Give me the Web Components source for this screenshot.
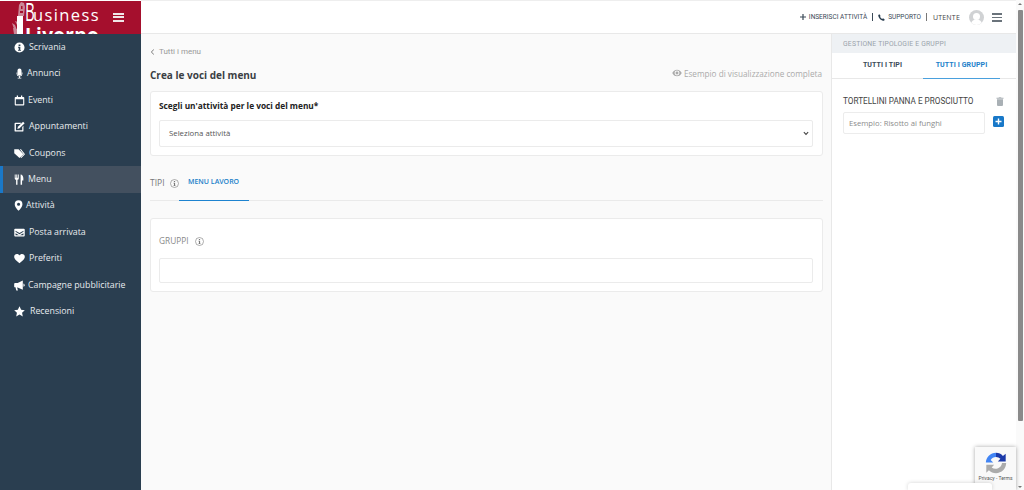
<!DOCTYPE html>
<html lang="it"><head><meta charset="utf-8"><title>Menu</title>
<style>
html,body{margin:0;height:490px;overflow:hidden;background:#fff;font-family:"Open Sans",sans-serif}
</style></head><body>
<app-shell>
  <side-nav slot="side"></side-nav>
  <top-bar slot="top"></top-bar>
  <menu-main slot="main"></menu-main>
  <group-panel slot="panel"></group-panel>
</app-shell>
<fake-scroll></fake-scroll>
<captcha-badge></captcha-badge>
<script>
const ICONS={
 info:'<path fill-rule="evenodd" d="M6 .5a5.500 5.500 0 1 1 0 11 5.500 5.500 0 0 1 0-11zM5 2.600v1.700h2V2.600zM4.400 5.200v1h.7v2.400h-.7v1h3.200v-1h-.7V5.200z"/>',
 mic:'<path d="M6 .5a2.200 2.200 0 0 1 2.200 2.200v3.400a2.200 2.200 0 0 1-4.400 0V2.700A2.200 2.200 0 0 1 6 .5z"/><path d="M2.800 5h.9v1.200a2.300 2.300 0 0 0 4.600 0V5h.9v1.200a3.200 3.200 0 0 1-2.700 3.100v1.300h1.500v.9H4v-.9h1.500V9.300a3.200 3.200 0 0 1-2.700-3.100z"/>',
 cal:'<path fill-rule="evenodd" d="M3 .6h1.400v1.500h3.200V.6H9v1.500h1.200a1 1 0 0 1 1 1v7.300a1 1 0 0 1-1 1H1.800a1 1 0 0 1-1-1V3.100a1 1 0 0 1 1-1H3zM2 4.600v5.600h8V4.600z"/>',
 edit:'<path d="M1.600 2h6.600L6.900 3.300H2.100v6.900h6.900V6.500L10.300 5.200V10.500a1 1 0 0 1-1 1H1.600a1 1 0 0 1-1-1V3a1 1 0 0 1 1-1z"/><path d="M9.900.7l1.700 1.700-5.600 5.600-2.300.6.600-2.300z"/>',
 tag:'<path d="M.3 1.300h4.700L10.300 6.700 6 11 .3 5.800z"/><path d="M6.300 1.300h1.400L12 6.700 8 11l-.9-.7 3.500-3.600z"/>',
 fork:'<path d="M.8.6h1v3.400h.7V.6h1v3.400h.7V.6h1v4.300c0 .8-.7 1.300-1.400 1.400v5.400H2.300V6.300C1.500 6.200.8 5.700.8 4.900z"/><path d="M7.200.6c1.900 0 3 2 3 4.400v2.200H8.800v4.500H7.200z"/>',
 pin:'<path fill-rule="evenodd" d="M5 .3a4.200 4.200 0 0 1 4.200 4.200c0 2.900-3 5.900-4.200 7.200C3.800 10.400.8 7.400.8 4.500A4.200 4.200 0 0 1 5 .3zM5 3a1.700 1.700 0 1 0 0 3.400A1.700 1.700 0 0 0 5 3z"/>',
 mail:'<path fill-rule="evenodd" d="M1.300 1.800h9.400a1 1 0 0 1 1 1v6.600a1 1 0 0 1-1 1H1.300a1 1 0 0 1-1-1V2.800a1 1 0 0 1 1-1zM1.700 4v1.200L6 7.800l4.300-2.600V4L6 6.500zM1.700 6.700V9h8.600V6.700L6 9.200z"/>',
 heart:'<path d="M6 11.200C3.600 9.100.2 6.800.2 4.100.2 2.300 1.600 1.100 3.100 1.100c1.300 0 2.300.6 2.900 1.600.6-1 1.600-1.600 2.900-1.600 1.500 0 2.900 1.200 2.900 3C11.800 6.800 8.400 9.100 6 11.200z"/>',
 horn:'<path d="M4 3.300L9.600.6v10L4 8.100H3.400l.9 3.300H2.500L1.600 8h-.4a1 1 0 0 1-1-1V4.300a1 1 0 0 1 1-1z"/><path d="M10.300 3.800a1.900 1.900 0 0 1 0 3.600z"/>',
 star:'<path d="M6 .2l1.800 3.800 4 .5-3 2.800.8 4.100L6 9.400l-3.600 2 .8-4.100-3-2.800 4-.5z"/>'
};
function def(name,html){
  const t=document.createElement('template');t.innerHTML=html;
  customElements.define(name,class extends HTMLElement{
    constructor(){super();this.attachShadow({mode:'open'}).appendChild(t.content.cloneNode(true));}
  });
}
def('app-shell',`<style>
:host{display:grid;grid-template-columns:141px 875px;grid-template-rows:34px 456px;width:1016px;height:490px;font-family:"Open Sans",sans-serif}
::slotted([slot=side]){grid-row:1/3}
.r{display:grid;grid-template-columns:690px 185px;grid-column:2}
</style><slot name="side"></slot><slot name="top"></slot><div class="r"><slot name="main"></slot><slot name="panel"></slot></div>`);

class NavItem extends HTMLElement{
  constructor(){super();const r=this.attachShadow({mode:'open'});
    const ic=this.getAttribute('icon');const g=this.getAttribute('gap')||'6';const active=this.hasAttribute('active');
    r.innerHTML=`<style>:host{display:flex;align-items:center;height:26.4px;box-sizing:border-box;padding-left:${active?11:14}px;color:#e8ebee;font:400 8.800px/1 "Open Sans",sans-serif;${active?'background:#43505f;border-left:3px solid #1a78c8;':''}}
    svg{width:11px;height:11px;fill:#fff;flex:none;margin-right:${g}px}</style>
    <svg viewBox="0 0 12 12">${ICONS[ic]}</svg><span><slot></slot></span>`;
  }
}
customElements.define('nav-item',NavItem);

def('side-nav',`<style>
:host{display:flex;flex-direction:column;background:#2a3e50;height:490px;overflow:hidden}
.logo{height:34px;flex:none;background:#a50f2d;border-top:1px solid #fff;box-sizing:border-box;overflow:hidden;color:#fff;display:flex;padding-left:12px}
.mark{width:13px;height:33px;flex:none}
.txt{width:78px;height:33px;flex:none;overflow:hidden;font-family:"Open Sans",sans-serif}
.b1{display:flex;align-items:baseline;font-size:16.500px;line-height:20px;letter-spacing:1.400px;white-space:nowrap;height:20px;font-weight:400}
.b1 b{display:inline-block;width:8px;font-weight:400;font-size:26px;line-height:20px;letter-spacing:0;transform:scaleX(.58);transform-origin:0 50%}
.b2{display:block;font-size:19px;font-weight:700;line-height:20px;letter-spacing:.3px;white-space:nowrap;margin-top:4px}
.ham{width:11px;height:9px;margin:12px 0 0 10px;flex:none;background:repeating-linear-gradient(#f0e6e8 0 2px,transparent 2px 3.500px)}
nav{display:flex;flex-direction:column;padding-top:.3px}
</style>
<div class="logo">
 <svg class="mark" viewBox="0 0 13 33"><path fill="#cb8797" d="M0 22l3 2 2 5-3-1zM7 4l2-3 3 1 1 4-1 9H6zM3 20l3 1-1 3zM1 27l4 1v5H2z"/><path fill="#a50f2d" d="M9 5h1.500v3H9zM8 10h3v2H8z"/><path fill="#fff" d="M5 15h6v18H5z"/></svg>
 <div class="txt"><span class="b1"><b>B</b><span>usiness</span></span><span class="b2">Livorno</span></div>
 <div class="ham"></div>
</div>
<nav>
 <nav-item icon="info" gap="4">Scrivania</nav-item>
 <nav-item icon="mic" gap="2">Annunci</nav-item>
 <nav-item icon="cal" gap="3">Eventi</nav-item>
 <nav-item icon="edit" gap="4">Appuntamenti</nav-item>
 <nav-item icon="tag" gap="4">Coupons</nav-item>
 <nav-item icon="fork" gap="3" active>Menu</nav-item>
 <nav-item icon="pin" gap="1">Attività</nav-item>
 <nav-item icon="mail" gap="4">Posta arrivata</nav-item>
 <nav-item icon="heart" gap="4">Preferiti</nav-item>
 <nav-item icon="horn" gap="3">Campagne pubblicitarie</nav-item>
 <nav-item icon="star" gap="5">Recensioni</nav-item>
</nav>`);

def('top-bar',`<style>
:host{display:flex;align-items:center;justify-content:flex-end;height:34px;box-sizing:border-box;background:#fff;border-top:1px solid #eee;border-bottom:1px solid #e8e8e8;padding:0 14px 0 0;font:400 6.500px/1 Roboto,sans-serif;color:#3b4a58}
.a{display:flex;align-items:center;gap:3px;white-space:nowrap}
.sep{width:1px;height:8px;background:#3b4a58;margin:0 5px}
.sep.l{background:#777;margin:0 6px 0 5px}
.u{font:400 7px/1 "Open Sans",sans-serif;color:#444;letter-spacing:.2px;margin-right:9px}
svg{display:block}
.av{width:15px;height:15px;border-radius:50%;background:#d0d2d4;overflow:hidden;margin-right:8px;flex:none}
.h{width:10px;height:9px;background:repeating-linear-gradient(#6a737b 0 1.500px,transparent 1.500px 3.750px)}
</style>
<span class="a"><svg width="6" height="6" viewBox="0 0 6 6"><path fill="#3b4a58" d="M2.400 0h1.200v2.400H6v1.200H3.600V6H2.400V3.600H0V2.400h2.400z"/></svg>INSERISCI ATTIVITÀ</span><i class="sep"></i>
<span class="a"><svg width="7" height="7" viewBox="0 0 12 12"><path fill="#2a3e50" d="M2.500.5l2 2.800-1 1.400c.7 1.600 2 2.900 3.600 3.700l1.500-1 2.900 2-1 2.100C5 11.500.3 6.500.4 1.600z"/></svg>SUPPORTO</span><i class="sep l"></i>
<span class="u">UTENTE</span>
<span class="av"><svg width="15" height="15" viewBox="0 0 15 15"><circle cx="7.500" cy="6.500" r="3.500" fill="#fff"/><ellipse cx="7.500" cy="14" rx="5.500" ry="4.500" fill="#fff"/></svg></span>
<span class="h"></span>`);

def('info-i',`<style>:host{display:inline-block;width:9px;height:9px;flex:none}svg{display:block}</style>
<svg width="9" height="9" viewBox="0 0 9 9"><circle cx="4.500" cy="4.500" r="4" fill="none" stroke="#8b8b8b" stroke-width=".7"/><path fill="#777" d="M3.900 1.900h1.200v1H3.900zM3.500 3.700h1.600v2.700h.5v.7H3.400v-.7h.6v-2h-.5z"/></svg>`);

def('menu-main',`<style>
:host{display:block;background:#fafafa;height:456px;box-sizing:border-box;padding:13px 8px 0 9px;color:#333;font-family:"Open Sans",sans-serif}
.back{display:flex;align-items:center;gap:4px;font:400 8px/10px Roboto,sans-serif;color:#999;height:10px}
.hd{display:flex;justify-content:space-between;align-items:center;margin-top:6px;height:20px}
h1{margin:4px 0 0;font:700 10px/20px "Open Sans",sans-serif;color:#3a3f44;white-space:nowrap}
.prev{display:flex;align-items:center;gap:2px;font-size:8.200px;color:#aaa;white-space:nowrap;margin-right:1px}
.card{background:#fff;border:1px solid #ebebeb;border-radius:3px;box-sizing:border-box}
.c1{margin-top:8px;height:65px;padding:0 9px 0 8px}
.lbl{font:700 8.300px/11px "Open Sans",sans-serif;color:#222;margin:8px 0 0 0}
.sel{display:flex;justify-content:space-between;align-items:center;height:27px;box-sizing:border-box;margin-top:9px;border:1px solid #ebebeb;border-radius:2px;padding:0 3px 0 9px;font:400 7.800px/1 "Open Sans",sans-serif;color:#555}
.tabs{display:flex;align-items:stretch;margin-top:8px;border-bottom:1px solid #eaeaea;height:36px}
.t{display:flex;align-items:center;gap:5px;font:400 8.500px/1 "Open Sans",sans-serif;color:#777;box-sizing:border-box;height:36px;padding-top:3px}
.tb{width:70px;text-align:center;border-bottom:1.500px solid #1d83d0;margin-bottom:-1px;font:600 7px/1 "Open Sans",sans-serif;color:#2180c9;padding-top:14px;box-sizing:border-box}
.c2{margin-top:17px;height:74px;padding:0 9px 0 8px}
.g{display:flex;align-items:center;gap:6px;margin-top:17px;height:10px;font:400 8.300px/10px "Open Sans",sans-serif;color:#888}
.inp{height:25px;box-sizing:border-box;margin-top:12px;border:1px solid #ebebeb;border-radius:2px}
</style>
<div class="back"><svg width="5" height="6" viewBox="0 0 5 6"><path fill="none" stroke="#777" d="M3.800.6L1.300 3l2.500 2.400"/></svg>Tutti i menu</div>
<div class="hd"><h1>Crea le voci del menu</h1><span class="prev"><svg width="10" height="8" viewBox="0 0 11 8"><path fill="#aaa" fill-rule="evenodd" d="M5.500.3c2.300 0 4.300 1.500 5.200 3.700-.9 2.200-2.900 3.700-5.200 3.700S1.200 6.200.3 4C1.200 1.800 3.200.3 5.500.3zm0 1a2.700 2.700 0 1 0 0 5.400 2.700 2.700 0 0 0 0-5.400zm0 1.100a1.600 1.600 0 1 1 0 3.200 1.600 1.600 0 0 1 0-3.200z"/></svg>Esempio di visualizzazione completa</span></div>
<div class="card c1">
 <div class="lbl">Scegli un'attività per le voci del menu*</div>
 <div class="sel"><span>Seleziona attività</span><svg width="6" height="5" viewBox="0 0 7 5"><path fill="none" stroke="#444" stroke-width="1.300" d="M1 1l2.500 2.500L6 1"/></svg></div>
</div>
<div class="tabs"><div class="t">TIPI <info-i></info-i></div><div class="tb">MENU LAVORO</div></div>
<div class="card c2">
 <div class="g">GRUPPI <info-i></info-i></div>
 <div class="inp"></div>
</div>`);

def('group-panel',`<style>
:host{display:block;background:#fff;border-left:1px solid #e8e8e8;box-sizing:border-box;height:456px;font-family:"Open Sans",sans-serif}
.h{height:19px;background:#eef1f4;font:400 6.800px/20px Roboto,sans-serif;color:#9aa3ab;padding-left:11px;letter-spacing:.2px}
.tabs{display:flex;height:25px;border-bottom:1px solid #e8e8e8;padding-left:12px}
.tab{width:77px;text-align:center;font:700 7px/25px Roboto,sans-serif;color:#3b4a58;letter-spacing:.1px}
.tab+.tab{margin-left:2px;color:#2180c9;border-bottom:1px solid #4aa0dd;height:25px}
.row{display:flex;justify-content:space-between;align-items:center;margin:17px 0 0 11px;padding-right:12px;height:10px;font:400 8.200px/10px Roboto,sans-serif;color:#444}
.row2{display:flex;margin:6px 0 0 11px;gap:8px}
.in{width:142px;height:22px;box-sizing:border-box;border:1px solid #ececec;border-radius:2px;font:400 7.700px/21px "Open Sans",sans-serif;color:#8c8c8c;padding-left:5px}
.plus{width:11px;height:11px;margin-top:4px;border-radius:1.500px;background:#1878c8;display:flex;align-items:center;justify-content:center}
</style>
<div class="h">GESTIONE TIPOLOGIE E GRUPPI</div>
<div class="tabs"><div class="tab">TUTTI I TIPI</div><div class="tab">TUTTI I GRUPPI</div></div>
<div class="row"><span>TORTELLINI PANNA E PROSCIUTTO</span><svg width="8" height="9" viewBox="0 0 8 9"><path fill="#a9b0b5" d="M.5.8h2L3 .2h2l.5.6h2v1H.5zM1 2.200h6V8a1 1 0 0 1-1 1H2a1 1 0 0 1-1-1z"/></svg></div>
<div class="row2"><div class="in">Esempio: Risotto ai funghi</div><div class="plus"><svg width="7" height="7" viewBox="0 0 7 7"><path fill="#fff" d="M2.800.5h1.400v2.300h2.300v1.400H4.200v2.300H2.800V4.200H.5V2.800h2.300z"/></svg></div></div>`);

def('fake-scroll',`<style>
:host{position:absolute;left:1016px;top:0;width:8px;height:490px;background:#fafafa}
.t{position:absolute;left:1.500px;top:10px;width:5px;height:411px;background:#8a8a8a;border-radius:1px}
.u,.d{position:absolute;left:1.500px;width:0;height:0;border:2.500px solid transparent}
.u{top:1px;border-bottom-color:#777}.d{bottom:0;border-top-color:#777}
</style><div class="u"></div><div class="t"></div><div class="d"></div>`);

def('captcha-badge',`<style>
:host{position:absolute;left:975px;top:447px;width:41px;height:43px;background:#f9f9f9;box-shadow:0 0 4px rgba(0,0,0,.35);font:400 5px/1 Roboto,sans-serif;color:#555;text-align:center;overflow:hidden}
svg{display:block;margin:4px auto 0}
.p{margin-top:1px;white-space:nowrap;font-size:5px}
</style>
<svg width="24" height="24" viewBox="0 0 26 26"><path fill="#1c3aa9" d="M13 2c3 0 5.600 1.300 7.500 3.300L23.500 3v8.500H15l2.800-3A7 7 0 0 0 13 6.500z"/><path fill="#4285f4" d="M2 13C2 7 7 2 13 2v4.500c-2.500 0-4.600 1.300-5.800 3.300L10 12.500H2z"/><path fill="#ababab" d="M24 13c0 6-5 11-11 11-3 0-5.700-1.200-7.700-3.200L2.500 23.500V15h8.500l-2.700 2.800A7 7 0 0 0 19.500 13z"/></svg>
<div class="p">Privacy - Terms</div>`);

const w=document.createElement('div');
w.style.cssText='position:absolute;left:908px;top:483px;width:84px;height:7px;background:#fff;box-shadow:0 0 4px rgba(0,0,0,.18);border-radius:3px 3px 0 0';
document.body.appendChild(w);
</script>
</body></html>
